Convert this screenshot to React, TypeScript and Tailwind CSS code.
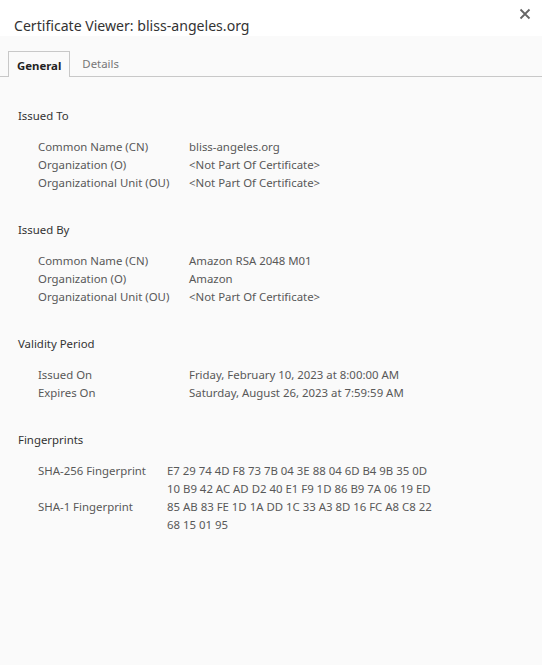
import React from "react";

const font = { fontFamily: '"Noto Sans", "Open Sans", Arial, sans-serif' };

type Row = { label: string; value: React.ReactNode };

function Section({ title, rows, valueCol = "w-[151px]", last = false }: { title: string; rows: Row[]; valueCol?: string; last?: boolean }) {
  return (
    <div className={last ? "" : "mb-[29px]"}>
      <div className="h-[18px] leading-[18px] text-[11.4px] text-[#333] mb-[13px]">{title}</div>
      <div className="pl-[20px]">
        {rows.map((r, i) => (
          <div key={i} className="flex text-[11.4px] leading-[18px] text-[#585858]">
            <div className={`${valueCol} shrink-0`}>{r.label}</div>
            <div>{r.value}</div>
          </div>
        ))}
      </div>
    </div>
  );
}

export default function App() {
  return (
    <div className="w-[542px] h-[665px] bg-[#fafafa] flex flex-col" style={font}>
      <div className="bg-white h-[36px] flex items-start justify-between pl-[14px] pr-[11px]">
        <div className="text-[14.1px] text-[#333] leading-[20px] pt-[16px]">Certificate Viewer: bliss-angeles.org</div>
        <svg width="12" height="12" viewBox="0 0 12 12" className="mt-[8px]">
          <path d="M1.5 1.5 L10.5 10.5 M10.5 1.5 L1.5 10.5" stroke="#666" strokeWidth="1.8" />
        </svg>
      </div>
      <div className="flex items-end h-[41px] border-b border-[#c8c8c8] pl-[8px]">
        <div className="h-[26px] -mb-px px-[8px] pt-[2px] bg-[#fafafa] border border-b-0 border-[#c8c8c8] flex items-center text-[11.4px] font-bold text-[#222]">
          General
        </div>
        <div className="h-[26px] pl-[12px] pt-[2px] flex items-center text-[11.4px] text-[#777]">Details</div>
      </div>
      <div className="pl-[18px] pt-[30px]">
        <Section
          title="Issued To"
          rows={[
            { label: "Common Name (CN)", value: "bliss-angeles.org" },
            { label: "Organization (O)", value: "<Not Part Of Certificate>" },
            { label: "Organizational Unit (OU)", value: "<Not Part Of Certificate>" },
          ]}
        />
        <Section
          title="Issued By"
          rows={[
            { label: "Common Name (CN)", value: "Amazon RSA 2048 M01" },
            { label: "Organization (O)", value: "Amazon" },
            { label: "Organizational Unit (OU)", value: "<Not Part Of Certificate>" },
          ]}
        />
        <Section
          title="Validity Period"
          rows={[
            { label: "Issued On", value: "Friday, February 10, 2023 at 8:00:00 AM" },
            { label: "Expires On", value: "Saturday, August 26, 2023 at 7:59:59 AM" },
          ]}
        />
        <Section
          title="Fingerprints"
          valueCol="w-[129px]"
          last
          rows={[
            {
              label: "SHA-256 Fingerprint",
              value: (
                <>
                  <div>E7 29 74 4D F8 73 7B 04 3E 88 04 6D B4 9B 35 0D</div>
                  <div>10 B9 42 AC AD D2 40 E1 F9 1D 86 B9 7A 06 19 ED</div>
                </>
              ),
            },
            {
              label: "SHA-1 Fingerprint",
              value: (
                <>
                  <div>85 AB 83 FE 1D 1A DD 1C 33 A3 8D 16 FC A8 C8 22</div>
                  <div>68 15 01 95</div>
                </>
              ),
            },
          ]}
        />
      </div>
    </div>
  );
}
